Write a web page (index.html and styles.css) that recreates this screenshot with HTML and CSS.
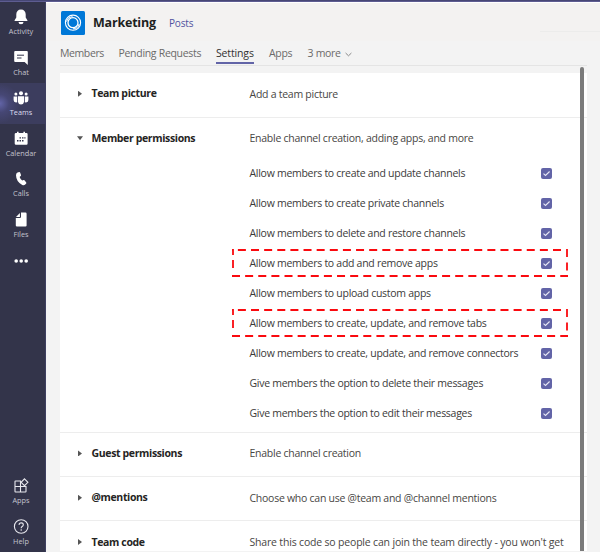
FILE: index.html
```html
<!DOCTYPE html>
<html lang="en">
<head>
<meta charset="utf-8">
<title>Marketing - Team settings</title>
<link rel="stylesheet" href="styles.css">
</head>
<body>
<div class="topline"></div>
<div class="app">
  <nav class="rail">
    <a class="rail-item"><svg width="16" height="16" viewBox="0 0 16 16"><path fill="#fff" d="M8 .5C5 .5 3.300 2.600 3.300 5.300V8.500L1.600 11.200V12H14.400V11.200L12.700 8.500V5.300C12.700 2.600 11 .5 8 .5ZM5.500 13A2.500 2.300 0 0 0 10.500 13Z"/></svg><span>Activity</span></a>
    <a class="rail-item"><svg width="16" height="16" viewBox="0 0 16 16"><path fill="#fff" d="M2.200 1H13.800Q14.800 1 14.800 2V15L11.600 12H2.200Q1.200 12 1.200 11V2Q1.200 1 2.200 1Z"/><path stroke="#33344a" d="M4 5.200H11M4 8H8.500"/></svg><span>Chat</span></a>
    <a class="rail-item active"><svg width="16" height="16" viewBox="0 0 16 16"><g fill="#fff"><circle cx="8" cy="3.300" r="2"/><circle cx="2.900" cy="4" r="1.500"/><circle cx="13.100" cy="4" r="1.500"/><path d="M5 6.200H11V12Q10.500 14.500 8 14.500T5 12ZM.6 6.600H4.200V12.300Q.6 13 .6 10ZM11.800 6.600H15.400V10Q15.400 13 11.800 12.300Z"/></g></svg><span>Teams</span></a>
    <a class="rail-item"><svg width="16" height="16" viewBox="0 0 16 16"><path fill="#fff" d="M4 .8H5.600V2H10.400V.8H12V2H13.500Q14.600 2 14.600 3V12.500Q14.600 13.700 13.500 13.700H3Q1.700 13.700 1.700 12.500V3Q1.700 2 3 2H4Z"/><g fill="#33344a"><path d="M6.500 6.200H8V7.600H6.500ZM9 6.200H10.500V7.600H9ZM11.300 6.200H12.500V7.600H11.300ZM4 9H5.500V10.400H4ZM6.500 9H8V10.400H6.500ZM9 9H10.500V10.400H9Z"/></g></svg><span>Calendar</span></a>
    <a class="rail-item"><svg width="16" height="16" viewBox="0 0 16 16"><path fill="#fff" d="M4.500 1.500L6.200 1.100Q6.900 1 7.200 1.700L8 4Q8.200 4.600 7.700 5L6.600 6.100Q7.400 8.300 9.200 9.600L10.700 9.100Q11.300 9 11.700 9.500L13.200 11.400Q13.600 12 13.200 12.500L12.200 13.500Q11 14.500 9.300 13.900Q3.200 10.800 3 4.200Q3 2 4.500 1.500Z"/></svg><span>Calls</span></a>
    <a class="rail-item"><svg width="16" height="16" viewBox="0 0 16 16"><path fill="#fff" d="M8 .6H12.500Q13.600.6 13.600 1.700V13.500Q13.600 14.600 12.500 14.600H4Q2.800 14.600 2.800 13.500V6H6.800Q8 6 8 5ZM6.900 1V4.900H3Z"/></svg><span>Files</span></a>
    <a class="rail-item more"><svg width="16" height="6" viewBox="0 0 16 6"><g fill="#fff"><circle cx="3.200" cy="3" r="1.800"/><circle cx="8.200" cy="3" r="1.800"/><circle cx="13.200" cy="3" r="1.800"/></g></svg></a>
    <a class="rail-item bottom"><svg width="16" height="16" viewBox="0 0 16 16"><g fill="none" stroke="#e8e8ee" stroke-width="1.100"><path d="M8 3H2.500Q2 3 2 3.500V13.500Q2 14 2.500 14H12.500Q13 14 13 13.500V8.500H2M7.500 3V14"/><path d="M11.500.9L14.900 4.300L11.500 7.700L8.100 4.300Z"/></g></svg><span>Apps</span></a>
    <a class="rail-item"><svg width="16" height="16" viewBox="0 0 16 16"><g fill="none" stroke="#e8e8ee" stroke-width="1.100"><circle cx="8.200" cy="7.500" r="6.800"/><path d="M6 5.900Q6.100 3.900 8.200 3.900T10.300 5.800Q10.300 6.800 9.200 7.500T8.200 9.300"/></g><circle cx="8.200" cy="11" r=".8" fill="#e8e8ee"/></svg><span>Help</span></a>
  </nav>
  <main class="main">
    <header class="header">
      <svg class="logo" width="24" height="24" viewBox="0 0 24 24"><rect width="24" height="24" rx="1.500" fill="#0078d7"/><g fill="none" stroke="#fff"><circle cx="12" cy="11.700" r="7.600" stroke-width="1.100"/><circle cx="12" cy="11.700" r="5" stroke-width="1.300"/><path stroke-width="1" d="M5.500 10.500Q6.500 6 11.500 5.500M18.200 13Q17 18 12 17.800"/></g></svg>
      <h1>Marketing</h1>
      <a class="posts">Posts</a>
      <span class="header-line"></span>
    </header>
    <div class="tabs">
      <a class="t-members">Members</a><a class="t-pending">Pending Requests</a><a class="t-settings selected">Settings</a><a class="t-apps">Apps</a><a class="t-more">3 more</a><svg class="chev" width="7" height="5" viewBox="0 0 7 5"><path d="M.6 1L3.500 3.800L6.400 1" fill="none" stroke="#888"/></svg>
    </div>
    <div class="panel">
      <section class="row"><i class="arrow"></i><h2>Team picture</h2><p>Add a team picture</p></section>
      <section class="row"><i class="arrow open"></i><h2>Member permissions</h2><p>Enable channel creation, adding apps, and more</p></section>
      <ul class="options">
        <li><span>Allow members to create and update channels</span><svg class="check" viewBox="0 0 11 11"><path d="M2.500 5.600L4.500 7.500L8.600 3.500"/></svg></li>
        <li><span>Allow members to create private channels</span><svg class="check" viewBox="0 0 11 11"><path d="M2.500 5.600L4.500 7.500L8.600 3.500"/></svg></li>
        <li><span>Allow members to delete and restore channels</span><svg class="check" viewBox="0 0 11 11"><path d="M2.500 5.600L4.500 7.500L8.600 3.500"/></svg></li>
        <li><span>Allow members to add and remove apps</span><svg class="check" viewBox="0 0 11 11"><path d="M2.500 5.600L4.500 7.500L8.600 3.500"/></svg><svg class="mark" viewBox="0 0 336 28"><path class="side" d="M335 0V28"/><path class="edge" d="M329 1H0"/><path class="edge" d="M0 27H336"/><path class="left" d="M1 0V28"/></svg></li>
        <li><span>Allow members to upload custom apps</span><svg class="check" viewBox="0 0 11 11"><path d="M2.500 5.600L4.500 7.500L8.600 3.500"/></svg></li>
        <li><span>Allow members to create, update, and remove tabs</span><svg class="check" viewBox="0 0 11 11"><path d="M2.500 5.600L4.500 7.500L8.600 3.500"/></svg><svg class="mark" viewBox="0 0 336 28"><path class="side" d="M335 0V28"/><path class="edge" d="M329 1H0"/><path class="edge" d="M0 27H336"/><path class="left" d="M1 0V28"/></svg></li>
        <li><span>Allow members to create, update, and remove connectors</span><svg class="check" viewBox="0 0 11 11"><path d="M2.500 5.600L4.500 7.500L8.600 3.500"/></svg></li>
        <li><span>Give members the option to delete their messages</span><svg class="check" viewBox="0 0 11 11"><path d="M2.500 5.600L4.500 7.500L8.600 3.500"/></svg></li>
        <li><span>Give members the option to edit their messages</span><svg class="check" viewBox="0 0 11 11"><path d="M2.500 5.600L4.500 7.500L8.600 3.500"/></svg></li>
      </ul>
      <section class="row"><i class="arrow"></i><h2>Guest permissions</h2><p>Enable channel creation</p></section>
      <section class="row"><i class="arrow"></i><h2>@mentions</h2><p>Choose who can use @team and @channel mentions</p></section>
      <section class="row"><i class="arrow"></i><h2>Team code</h2><p class="d-code">Share this code so people can join the team directly - you won't get</p></section>
      <div class="scrollbar"></div>
    </div>
  </main>
</div>
</body>
</html>
```
FILE: styles.css
```css
* { box-sizing: border-box; }
body {
  margin: 0;
  width: 600px;
  height: 552px;
  overflow: hidden;
  display: flex;
  flex-direction: column;
  background: #f3f3f3;
  font-family: "Open Sans", "Noto Sans", sans-serif;
  color: #3b3a39;
}
h1, h2, p, ul { margin: 0; padding: 0; }
.topline { height: 2px; flex: none; background: #464775; border-bottom: 1px solid #5d5c91; }
.app { flex: 1; display: flex; min-height: 0; }

.rail {
  width: 46px;
  flex: none;
  display: flex;
  flex-direction: column;
  background: #33344a;
  border-right: 1px solid #3e3f60;
}
.rail-item {
  height: 40.500px;
  flex: none;
  display: flex;
  flex-direction: column;
  align-items: center;
  padding: 7px 3px 0 0;
  color: #c3c3ce;
  font-size: 7.300px;
  line-height: 10px;
}
.rail-item span { margin-top: 1px; }
.rail-item.active {
  background: radial-gradient(circle at 0 50%, #6264a7 0, #464775 9px, #3c3d5e 20px);
  color: #dcdcf0;
}
.rail-item.more { padding-top: 13px; }
.rail-item.bottom { margin-top: auto; }

.main { flex: 1; min-width: 0; display: flex; flex-direction: column; }
.header {
  height: 39px;
  flex: none;
  display: flex;
  align-items: center;
  padding: 2px 0 0 15px;
  background: #f3f2f1;
  border-top: 1px solid #fff;
}
h1 { margin-left: 8px; font-size: 12.500px; letter-spacing: -.2px; line-height: 18px; width: 76px; color: #201f1e; white-space: nowrap; }
.posts { color: #5153a0; font-size: 10px; letter-spacing: -.15px; line-height: 16px; white-space: nowrap; }
.header-line { width: 60px; height: 1px; margin: 17px 0 0 auto; background: #ececeb; }
.tabs {
  height: 25px;
  flex: none;
  width: 527px;
  margin-left: 14px;
  display: flex;
  border-bottom: 1px solid #e4e4e4;
  font-size: 10.500px;
  letter-spacing: -.3px;
  line-height: 15px;
  padding-top: 5px;
  color: #6b6a69;
  white-space: nowrap;
}
.t-members { width: 58.500px; letter-spacing: -.4px; }
.t-pending { width: 97.500px; }
.t-settings { width: 38px; height: 18px; letter-spacing: -.15px; }
.selected { color: #323130; border-bottom: 2px solid #6264a7; }
.t-apps { margin-left: 15px; width: 38.500px; }
.t-more { width: 37px; }
.chev { margin-top: 6px; }

.panel {
  position: relative;
  width: 527px;
  height: 478px;
  margin: 7px 0 0 14px;
  background: #fff;
}
.row {
  height: 44.300px;
  display: grid;
  grid-template-columns: 31.500px 158px 1fr;
  align-items: center;
  border-top: 1px solid #ededed;
}
.row:first-child { border-top: 0; height: 43.500px; }
.arrow { width: 4px; height: 6px; margin-left: 18px; margin-top: -2px; background: #555; clip-path: polygon(0 0, 100% 50%, 0 100%); }
.arrow.open { width: 6px; height: 4px; margin-left: 17px; clip-path: polygon(0 0, 100% 0, 50% 100%); }
h2 { margin-top: -2px; font-size: 10.500px; letter-spacing: -.36px; line-height: 15px; color: #252423; white-space: nowrap; }
.row p { margin-top: -1px; font-size: 10.500px; letter-spacing: -.26px; line-height: 15px; color: #484644; white-space: nowrap; }
.row .d-code { letter-spacing: -.18px; }
.options { list-style: none; height: 274px; margin-top: -3px; padding-top: .4px; }
.options li {
  position: relative;
  height: 30.100px;
  display: flex;
  align-items: center;
  justify-content: space-between;
  padding: 0 35px 0 189.500px;
  font-size: 10.500px;
  letter-spacing: -.28px;
  line-height: 15px;
  white-space: nowrap;
}
.check { width: 11px; height: 11px; border-radius: 2px; background: #6264a7; }
.check path { fill: none; stroke: #e6e6f4; stroke-width: 1.100; }
.mark { position: absolute; left: 171.500px; top: .6px; width: 336px; height: 28px; }
.mark path { fill: none; stroke: #fa0a0f; stroke-width: 1.800; }
.mark .edge { stroke-dasharray: 8 5.130; }
.mark .side { stroke-dasharray: 8 5.500; }
.mark .left { stroke-dasharray: 6 5 8 7; }
.scrollbar { position: absolute; left: 519.500px; top: -6px; width: 4.500px; height: 484px; border-radius: 2px 2px 0 0; background: #7b7b7b; }
```
